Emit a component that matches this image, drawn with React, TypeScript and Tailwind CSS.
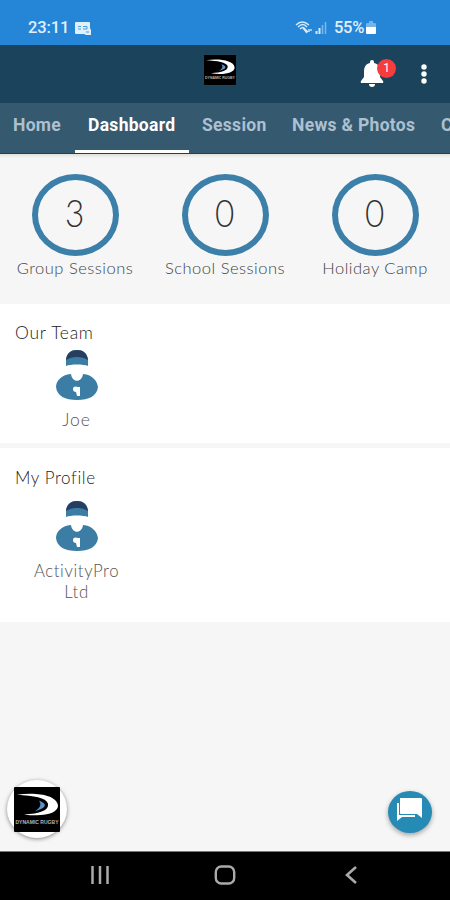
import React from 'react';

const tabs = [
  { label: 'Home', width: 'w-[75px]' },
  { label: 'Dashboard', width: 'w-[114px]', active: true },
  { label: 'Session', width: 'w-[90px]' },
  { label: 'News & Photos', width: 'w-[149px]' },
  { label: 'C', width: 'w-[22px]' },
];

const stats = [
  { value: 3, label: 'Group Sessions' },
  { value: 0, label: 'School Sessions' },
  { value: 0, label: 'Holiday Camp' },
];

const Logo = ({ className }: { className: string }) => (
  <svg viewBox="0 0 46 46" preserveAspectRatio="none" className={className}>
    <rect width="46" height="46" rx="1" fill="#000" />
    <path d="M3 8C21 5 43 8 44 19C44 27 30 31 10 28C26 27 35 24 34 17C32 11 20 9 3 8Z" fill="#fff" />
    <path d="M25 14C31 16 33 19 28 22L21 25C26 21 28 18 25 14Z" fill="#5b91cb" />
    <text x="23" y="37.5" textAnchor="middle" textLength="43" lengthAdjust="spacingAndGlyphs" fontSize="6" fontWeight="700" fontFamily="Liberation Sans, sans-serif" fill="#b5b5b5">DYNAMIC RUGBY</text>
  </svg>
);

const PersonIcon = () => (
  <svg viewBox="0 0 42 50" className="w-[42px] h-[50px] block">
    <path d="M10 16V9C11 3 15 0 21 0S31 3 32 9V16C28 14 14 14 10 16Z" fill="#3c7da5" />
    <path d="M10 10C11 3 15 0 21 0S31 3 32 10C26 6 16 6 10 10Z" fill="#263f60" />
    <path d="M15 24C5 25 0 31 0 37C1 46 9 50 21 50S41 46 42 37C41 31 37 25 27 24C26 33 16 33 15 24Z" fill="#3c7da5" />
    <path d="M17 39C17 36 20 36 22 37H24V46H21L20 42C18 42 17 41 17 39Z" fill="#fff" />
  </svg>
);

const StatusBar = () => (
  <div className="h-[45px] shrink-0 bg-[#2586d8] pl-7 pt-[18px] flex items-start text-[#e1effb] font-['Roboto'] font-medium text-[16.5px] leading-[20px]">
    <span className="w-[47px] tracking-[-0.1px]">23:11</span>
    <svg viewBox="0 0 16 13" className="w-4 h-[13px] mt-1">
      <path d="M1 0H14Q15 0 15 1V6L16 8V13H11L9 12H1Q0 12 0 11V1Q0 0 1 0Z" fill="#e1effb" />
      <path d="M3 4.5H6M3 7H6M8 4.5H12V7H8M11 10H14" fill="none" stroke="#2586d8" strokeWidth="0.8" />
    </svg>
    <svg viewBox="0 0 32 14" className="w-8 h-[14px] ml-[204px] mt-[3px]" fill="none" stroke="#d4e9fb">
      <path d="M1 4Q7-2 14 4M3 6Q8 1 12 6M5 8Q8 5 10 8" strokeWidth="1.4" />
      <path d="M8 7L12 12M10 8L13 11M14 8V11M16 8V10" strokeWidth="1.4" />
      <path d="M21.5 13V10M24.5 13V7" strokeWidth="2" />
      <path d="M27.5 13V4M30.5 13V1" strokeWidth="1.5" opacity="0.5" />
    </svg>
    <span className="ml-[7px] w-[32px] tracking-[-0.3px]">55%</span>
    <svg viewBox="0 0 10 14" className="w-[10px] h-[14px] mt-[3px]">
      <path d="M3 0H7V2H9Q10 2 10 4V7H0V4Q0 2 1 2H3Z" fill="#75b3e9" />
      <path d="M0 6H10V12Q10 13 9 13H1Q0 13 0 12Z" fill="#fff" />
    </svg>
  </div>
);

const AppBar = () => (
  <header className="h-[58px] shrink-0 bg-[#1b435b] pl-[204px] pt-[10px] flex items-start">
    <Logo className="w-8 h-[30px]" />
    <div className="relative ml-[124px] mt-[5px] w-6 h-7">
      <svg viewBox="0 0 24 27" className="w-6 h-[27px]" fill="#fff">
        <path d="M10 3V2Q10 0 12 0T14 2V3C19 4 20 8 20 12V17L23 21Q24 23 22 23H2Q0 23 1 21L4 17V12C4 8 5 4 10 3Z" />
        <path d="M9 24H15Q15 27 12 27T9 24Z" />
      </svg>
      <span className="absolute left-[17px] -top-[1px] w-[19px] h-[19px] rounded-full bg-[#f63d3d] text-white font-['Roboto'] text-[12px] leading-[18px] text-center">1</span>
    </div>
    <svg viewBox="0 0 6 20" className="w-[6px] h-5 ml-[37px] mt-[9px]" fill="#fff">
      <circle cx="3" cy="3" r="2.7" />
      <circle cx="3" cy="10" r="2.7" />
      <circle cx="3" cy="17" r="2.7" />
    </svg>
  </header>
);

const Tabs = () => (
  <nav className="h-[51px] shrink-0 flex overflow-hidden bg-[#35596f] border-b border-[#1b435b] font-['Roboto'] font-bold text-[17.5px] leading-[22px] tracking-[0.3px] whitespace-nowrap">
    {tabs.map((tab) => (
      <div
        key={tab.label}
        className={`${tab.width} shrink-0 h-[50px] pl-[13px] pt-[11px] border-b-[3px] ${tab.active ? 'text-white border-white' : 'text-[#adc0cf] border-transparent'}`}
      >
        {tab.label}
      </div>
    ))}
  </nav>
);

const App: React.FC = () => {
  return (
    <div className="w-[450px] h-[900px] flex flex-col overflow-hidden bg-[#f6f6f6] font-['Lato',sans-serif]">
      <StatusBar />
      <AppBar />
      <Tabs />

      <section className="h-[150px] shrink-0 pt-5 grid grid-cols-3 bg-linear-to-b from-[#dededb] to-[#f6f6f6] to-[4px]">
        {stats.map((stat) => (
          <div key={stat.label} className="flex flex-col items-center">
            <div className="w-[87px] h-[82px] rounded-[50%] border-[6px] border-[#3c80aa] flex items-center justify-center text-[37px] leading-none font-light text-[#333] pb-[6px]">
              <span className="block scale-x-90">{stat.value}</span>
            </div>
            <div className="mt-[2px] text-[16.5px] leading-[20px] font-light tracking-[0.5px] text-[#444] whitespace-nowrap">{stat.label}</div>
          </div>
        ))}
      </section>

      <section className="h-[139px] shrink-0 bg-white pt-[19px] pl-[15px]">
        <h2 className="text-[17.5px] leading-[20px] font-light tracking-[0.7px] text-[#222]">Our Team</h2>
        <div className="w-[123px] mt-[7px] flex flex-col items-center">
          <PersonIcon />
          <div className="mt-[10px] text-[17.5px] leading-[20px] font-light tracking-[0.9px] text-[#555]">Joe</div>
        </div>
      </section>

      <section className="h-[174px] mt-[5px] shrink-0 bg-white pt-[20px] pl-[15px]">
        <h2 className="text-[17px] leading-[20px] font-light tracking-[0.6px] text-[#222]">My Profile</h2>
        <div className="w-[123px] mt-[13px] flex flex-col items-center">
          <PersonIcon />
          <div className="mt-[9px] w-[100px] text-center text-[16.8px] leading-[21px] font-light tracking-[0.6px] text-[#555]">ActivityPro Ltd</div>
        </div>
      </section>

      <div className="flex-1 px-[7px] pt-[158px] flex justify-between items-start">
        <button className="w-[60px] h-[58px] rounded-[50%] bg-white shadow-[0_1px_4px_rgba(0,0,0,0.45)] flex items-center justify-center">
          <Logo className="w-[46px] h-[45px]" />
        </button>
        <button className="w-11 h-[42px] mt-[11px] mr-[11px] rounded-[50%] bg-[#258bb4] shadow-[0_2px_5px_rgba(0,0,0,0.35)] flex items-center justify-center">
          <svg viewBox="0 0 26 23" className="w-[26px] h-[23px] mb-[5px]" fill="#fff">
            <path d="M3 0H24Q25 0 25 1V20L20 16H4Q3 16 3 15Z" />
            <path d="M0 5H2V17H18V19H5L0 23Z" />
          </svg>
        </button>
      </div>

      <footer className="h-[49px] shrink-0 bg-black border-t border-[#777] pt-[13px] pl-[90px] flex items-start">
        <svg viewBox="0 0 20 20" className="w-5 h-5" stroke="#aaa" strokeWidth="2.5">
          <path d="M2.5 1V19M10 1V19M17.5 1V19" />
        </svg>
        <svg viewBox="0 0 22 20" className="w-[22px] h-5 ml-[104px]" fill="none" stroke="#aaa" strokeWidth="2.4">
          <rect x="1.8" y="1.5" width="18.4" height="17" rx="5.5" />
        </svg>
        <svg viewBox="0 0 14 20" className="w-[14px] h-5 ml-[108px]" fill="none" stroke="#aaa" strokeWidth="2.6">
          <path d="M12 2L3 10L12 18" />
        </svg>
      </footer>
    </div>
  );
};

export default App;
